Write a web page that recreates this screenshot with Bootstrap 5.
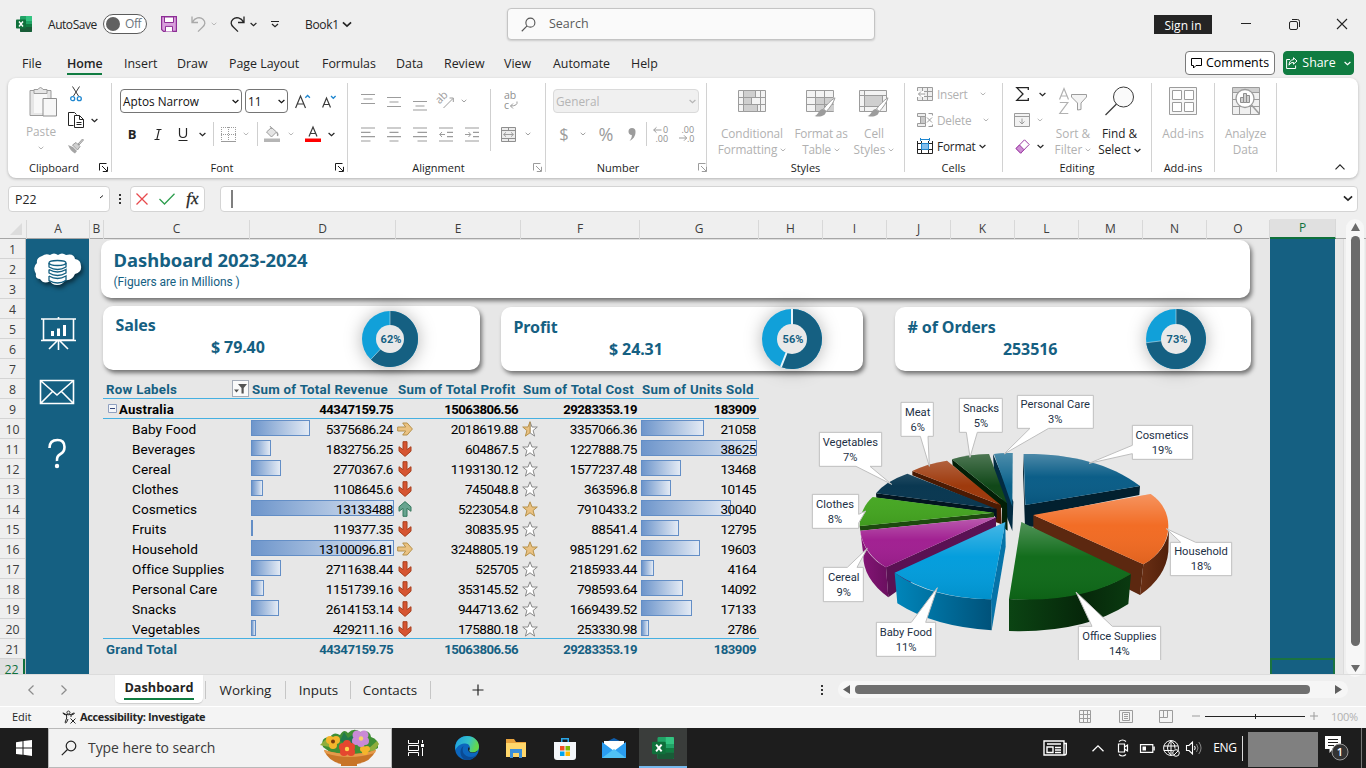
<!DOCTYPE html>
<html lang="en">
<head>
<meta charset="utf-8">
<title>Book1 - Excel</title>
<link href="https://cdn.jsdelivr.net/npm/bootstrap@5.3.0/dist/css/bootstrap.min.css" rel="stylesheet">
<style>
:root{--teal:#156082;--ink:#242424;--dim:#b1b1b1;--ui:"Open Sans","Noto Sans",sans-serif;--doc:Roboto,"Noto Sans",sans-serif}
body{width:1366px;height:768px;overflow:hidden;background:#efefef;font-family:var(--ui);font-size:12px;line-height:16px;color:var(--ink)}
svg{display:block;flex:none;overflow:visible}
.xgrid{display:grid;align-items:center;justify-items:center}
.nw,.xgrid,.rib,.sheetbar{white-space:nowrap}
.ln{fill:none;stroke:currentColor}
.ic-dim{color:#9c9c9c}.t-dim{color:var(--dim)}
.ic{color:#3b3b3b}
/* title bar */
.titlebar{height:48px;grid-template-columns:16px 16px 16px 55px 44px 14px 16px 14px 15px 16px 8px 15px 16px 8px 12px 24px 34px 16px 152px 368px 279px 58px 10px 48px 48px 48px}
.titlebar>.s{justify-self:start;padding-top:1px}
.autosave{letter-spacing:-.45px}
.switch-pill{width:44px;height:20px;border:1px solid #5c5c5c;border-radius:10px;background:#fff}
.switch-pill i{width:14px;height:14px;border-radius:50%;background:#616161;margin-left:2px}
.switch-pill span{letter-spacing:-.4px;padding-left:5px}
.searchbox{width:368px;height:32px;border:1px solid #c4c4c4;border-radius:4px;background:#fafafa;box-shadow:0 1px 2px rgba(0,0,0,.15);font-size:12.5px;color:#5a5a5a}
.signin{width:58px;height:19px;background:#242424;color:#fff;line-height:21px;text-align:center}
/* tabs */
.menurow{height:30px;grid-template-columns:22px 45px 57px 53px 52px 93px 74px 48px 60px 49px 78px 554px 90px 8px 71px;justify-items:start;font-size:12.4px}
.menurow>div{padding-top:1px}
.menurow .cur{font-weight:600;letter-spacing:-.1px}
.menurow .cur:after{content:"";display:block;height:2px;background:#107c41;margin:1px 0 -3px}
.btn-x{height:24px;border:1px solid #7a7a7a;border-radius:4px;background:#fff}
.btn-share{width:71px;background:#107c41;color:#fff;border-color:#107c41}
/* ribbon */
.rib{height:100px;margin:0 8px;padding-top:3px;background:#fff;border-radius:8px;box-shadow:0 1px 3px rgba(0,0,0,.25);font-size:11.8px}
.grp{height:96px}
.gsep{width:1px;height:89px;background:#d2d2d2;margin-top:2px}
.grp .body{height:78px}
.grp .cap{height:18px;line-height:18px;text-align:center;font-size:11px;color:#1c1c1c;position:relative}
.grp .cap svg{position:absolute;right:3px;top:4px}
.r26{height:26px}.r40{height:40px}
.w-clip{width:103px}.w-font{width:235px}.w-align{width:197px}.w-num{width:160px}.w-sty{width:197px}.w-cell{width:97px}.w-edit{width:148px}.w-add{width:62px}.w-ana{width:61px}
.g-clip{grid-template-columns:20px 16px}
.g-f1{grid-template-columns:122px 3px 43px 28px 26px;padding-left:8px}
.g-f2{grid-template-columns:26px 26px 24px 14px 8px 22px 14px 8px 22px 16px 28px 8px;padding-left:7px}
.g-al{grid-template-columns:repeat(5,26px);padding-left:7px}
.g-ar{grid-template-columns:25px 14px}
.g-n{grid-template-columns:22px 16px 30px 22px 6px 24px 28px;padding-left:7px}
.g-sty{grid-template-columns:86px 52px 54px;padding-left:2px}
.g-cell{grid-template-columns:16px 4px 1fr;padding-left:12px;justify-items:start}
.g-cell .t{letter-spacing:-.2px}
.g-ed{grid-template-columns:22px 14px}
.combo{height:24px;border:1px solid #757575;border-radius:4px;padding:0 2px;color:#111}
.combo-off{width:146px;background:#f0f0f0;border-color:#dadada;color:#b5b5b5}
.vs{width:1px;height:24px;background:#cfcfcf}
.vs-tall{height:62px;width:1px;background:#cfcfcf;margin:8px 5px 0 5px}
.big{line-height:15.6px;text-align:center}
.big .pic{height:33px}
/* formula bar */
.fbar{height:41px;padding:8px 8px 0}
.fbox{height:26px;background:#fff;border:1px solid #d4d4d4;border-radius:4px}
.namebox{width:102px;padding:0 6px;font-size:12.3px;line-height:25px}
.fbtns{width:75px}
/* sheet */
.colheads{height:20px;border-bottom:1px solid #a6a6a6;font-size:12px;color:#3d3d3d;grid-template-columns:27px 63px 14px 146px 146px 125px 119px 119px repeat(7,64px) 63px 66px}
.colheads>div{width:100%;height:19px;line-height:18px;text-align:center;border-right:1px solid #d8d8d8}
.colheads>.hot{background:#e0e0e0;color:#0f703b;height:20px;border-bottom:2px solid #0f703b;align-self:start}
.sheet{height:435px;background:#e7e7e7}
.rowheads{width:26px;background:#efefef;border-right:1px solid #c3c3c3;font-size:12.3px;color:#3d3d3d;overflow:hidden;height:435px}
.rowheads div{height:20px;line-height:21px;text-align:center;border-bottom:1px solid #d4d4d4}
.rowheads .hot{background:#e0e0e0;color:#0f703b;border-right:2px solid #0f703b;border-bottom:0}
.side{width:63px;background:var(--teal);color:#fff;padding-left:0}
.canvas{width:1181px;height:435px;overflow:hidden}
.tile{background:#fff;border-radius:10px;box-shadow:2px 3px 4px rgba(0,0,0,.5);color:var(--teal);font-family:"Noto Sans",sans-serif;font-weight:700;font-size:16px;line-height:22px}
.headtile{width:1149px;height:58px;margin:1px 0 0 12px;padding:9px 0 0 12.5px}
.headtile h1{font:700 18.4px/22px "Noto Sans",sans-serif;margin:0}
.headtile p{font:12px/22px var(--doc);margin:0;letter-spacing:-.07px}
.kpis{margin:8px 0 0 14px;height:73px}
.kpi{height:64px;display:grid;letter-spacing:-.1px}
.k1{width:377px;grid-template-columns:255px 64px}.k2{width:362px;grid-template-columns:259px 64px;margin:1px 32px 0 21px}.k3{width:356px;grid-template-columns:249px 64px;margin-top:1px}
.k1 .donut{margin-top:1px}
.kpi .lab{padding:9px 0 0 12.500px}.k1 .lab{padding-top:8px}.kpi .val{padding-left:108px}
.pvt{width:656px;margin-left:14px;font-family:var(--doc);font-size:13.6px;line-height:20px;color:#000}
.pvt .pr{display:grid;grid-template-columns:146px 146px 125px 119px 119px;height:20px}
.pvt .pr>div{position:relative;text-align:right;padding-right:2px;letter-spacing:-.52px}
.pvt .pr>div:first-child{text-align:left;padding-left:29px;letter-spacing:.06px}
.pvt .hd>div:nth-child(n){text-align:left;padding-left:3px;letter-spacing:.28px;line-height:22px}
.pvt .hd,.pvt .tot{color:var(--teal);font-weight:700}
.pvt .hd,.pvt .au,.pvt .last{border-bottom:1px solid #45b0e1}
.pvt .au,.pvt .tot{font-weight:700;font-size:13.2px;line-height:21px}
.pvt .hd{font-size:13.3px}
.pvt .tot>div:first-child{padding-left:3px;letter-spacing:.3px}
.pvt .au>div:first-child{padding-left:16px;letter-spacing:.2px}
.dbar{position:absolute;left:2px;top:1px;height:16px;border:1px solid #638ec6;background:linear-gradient(90deg,#6d95cb,#e3eaf4);z-index:0}
.pvt span{position:relative;z-index:1}
.pvt .mk{position:absolute;left:2px;top:2px}
.filt{position:absolute;right:0;top:1px;width:17px;height:17px;border:1px solid #a5acb8;background:#fafafa}
.chart{margin:6px 0 0 41px;font-family:var(--doc)}
.lbl text{font-size:33.5px;fill:#1d3146;text-anchor:middle}
.lbl path{fill:#fff;stroke:#bfbfbf;stroke-width:3}
.pcol{width:65px;background:var(--teal)}
.selcell{height:16px;border:2px solid #1a7341;border-bottom:0;margin-top:419px}
.vscroll{width:22px;background:#efefef;border-left:1px solid #dcdcdc;margin-left:8px}
/* sheet tabs and status */
.sheetbar{height:33px;border-top:1px solid #dcdcdc;border-bottom:1px solid #fff;font-size:13.4px;grid-template-columns:15px 32px 33px 35px 88px 5px 75px 5px 61px 3px 76px 5px 90px 298px 17px 528px}
.sheetbar>div,.sheetbar>svg{margin-top:-2px}
.sheetbar>.tab-on{width:88px;margin-top:0;height:28px;background:#fff;border-radius:0 0 5px 5px;box-shadow:0 1px 1px #ccc;align-self:start;font-weight:700;font-size:12.7px;text-align:center;line-height:24px}
.tab-on span{display:inline-block;height:25px;border-bottom:2px solid #107c41}
.tsep{width:1px;height:18px;background:#c6c6c6}
.status{height:21px;background:#f4f4f4;font-size:11px;grid-template-columns:12px 50px 18px 126px 873px 40px 40px 46px 100px 26px 35px;justify-items:start;padding-bottom:2px}
.status b{letter-spacing:-.38px}
/* taskbar */
.task{height:40px;background:#1d1d1d;color:#fff;grid-template-columns:48px 344px 48px 54px 43px 55px 45px 51px 341px 52px 34px 16px 32px 16px 30px 32px 2px 80px 38px 5px}
.tsearch{width:344px;height:40px;background:#f2f2f2;border:1px solid #b9b9b9;color:#3a3a3a;font-size:14px;padding-left:12px}
.hot-app{width:48px;height:40px;background:#3a3d3b;border-bottom:2px solid #76b9ed}
.clock{width:70px;height:35px;background:#808080;margin-top:3px}
</style>
</head>
<body class="d-flex flex-column">
<svg width="0" height="0" class="position-absolute">
<defs>
<symbol id="chev" viewBox="0 0 7 5"><path class="ln" stroke-width="1.2" d="M.6 1l2.9 2.7L6.4 1"/></symbol>
<symbol id="launch" viewBox="0 0 9 9"><path class="ln" d="M.5 7.500V.5H7.500M3 3l5 5M8.500 3.800V8.500H3.800"/></symbol>
<symbol id="xl" viewBox="0 0 16 16"><path fill="#21a366" d="M5 0h10q1 0 1 1v14q0 1-1 1H5q-1 0-1-1V1q0-1 1-1z"/><path fill="#33c481" d="M10 0h5q1 0 1 1v4h-6z"/><path fill="#107c41" d="M4 5h6v6H4z"/><path fill="#185c37" d="M4 11h12v4q0 1-1 1H5q-1 0-1-1z"/><path fill="#107c41" d="M10 8h6v3h-6z"/><rect y="3.500" width="10" height="9" rx=".8" fill="#0f703b"/><path stroke="#fff" stroke-width="1.400" d="M3 5.500l4 5M7 5.500l-4 5"/></symbol>
<symbol id="brush" viewBox="0 0 22 20"><path fill="#fff" stroke="#9c9c9c" d="M21 .8C17 3 12.500 8 9.500 12l2.800 2.500C16 10.500 20 5 21 .8z"/><path fill="#9c9c9c" d="M9 12l3 2.800C11.500 19 6 20.500.5 19c4-.8 4-7 8.500-7z"/></symbol>
<symbol id="dn" viewBox="0 0 14 16"><path fill="#d65532" stroke="#a8401f" d="M5 .7h4v8l4-3v4.500L7 15.400l-6-5.200V5.700l4 3z"/></symbol>
<symbol id="up" viewBox="0 0 14 16"><path fill="#68a490" stroke="#35795f" d="M5 15.300h4v-8l4 3V5.800L7 .6 1 5.800v4.500l4-3z"/></symbol>
<symbol id="rt" viewBox="0 0 16 14"><path fill="#eac282" stroke="#b5914c" d="M.7 5v4h8l-3 4h4.500L15.400 7 10.200 1H5.700l3 4z"/></symbol>
<symbol id="st" viewBox="0 0 16 16"><path fill="#fff" stroke="#8a8a8a" d="M8 .8l2 5.200h5.300l-4.200 3.500 1.500 5.600L8 11.800l-4.600 3.300 1.500-5.600L.7 6H6z"/></symbol>
<symbol id="stf" viewBox="0 0 16 16"><path fill="#eac282" stroke="#b5914c" d="M8 .8l2 5.200h5.300l-4.200 3.500 1.500 5.600L8 11.800l-4.600 3.300 1.500-5.600L.7 6H6z"/></symbol>
<symbol id="sth" viewBox="0 0 16 16"><path fill="#fff" stroke="#8a8a8a" d="M8 .8l2 5.200h5.300l-4.200 3.500 1.500 5.600L8 11.800z"/><path fill="#eac282" stroke="#b5914c" d="M8 .8L6 6H.7l4.200 3.500-1.500 5.600L8 11.800z"/></symbol>
<symbol id="mag" viewBox="0 0 16 16"><circle class="ln" cx="10" cy="6" r="4.800" stroke-width="1.200"/><path class="ln" stroke-width="1.200" d="M6.500 9.500L.8 15.200"/></symbol>
</defs>
</svg>

<header class="titlebar xgrid">
  <div></div><svg width="16" height="16"><use href="#xl"/></svg><div></div>
  <div class="s autosave">AutoSave</div>
  <div class="switch-pill d-flex align-items-center"><i></i><span class="text-secondary">Off</span></div>
  <div></div>
  <svg width="16" height="16" viewBox="0 0 16 16"><path fill="#d9a0dc" stroke="#8e2f96" stroke-width="1.200" d="M.6.6h14.800v14.800H2.500L.6 13.500z"/><path fill="#fff" stroke="#8e2f96" d="M3.500 1h9v5.500h-9zM4.500 15.400v-5h7v5"/></svg>
  <div></div>
  <svg width="15" height="16" viewBox="0 0 15 16" color="#a9a9a9"><path class="ln" stroke-width="1.300" d="M1 .5v6h6M1.200 6.300C4 1.500 9 .5 12 3.300s2 5.500-.3 7.700L7 15.600"/></svg>
  <svg width="6" height="4" color="#b5b5b5"><use href="#chev"/></svg>
  <div></div>
  <svg width="15" height="16" viewBox="0 0 15 16"><path class="ln" stroke-width="1.300" d="M14 .5v6H8M13.800 6.300C11 1.500 6 .5 3 3.300s-2 5.500.3 7.700L8 15.600"/></svg>
  <svg width="7" height="5"><use href="#chev"/></svg>
  <div></div>
  <svg width="8" height="8" viewBox="0 0 8 8"><path class="ln" stroke-width="1.200" d="M0 1.500h8M1 4l3 2.800L7 4"/></svg>
  <div></div>
  <div class="s" style="letter-spacing:-.3px">Book1</div>
  <svg width="10" height="7"><use href="#chev"/></svg>
  <div></div>
  <div class="searchbox d-flex align-items-center"><svg width="15" height="15" style="margin:0 9px 0 13px" color="#555"><use href="#mag"/></svg><span class="ms-1">Search</span></div>
  <div></div>
  <div class="signin">Sign in</div><div></div>
  <svg width="10" height="2" viewBox="0 0 10 2"><path class="ln" d="M0 .5h10"/></svg>
  <svg width="11" height="11" viewBox="0 0 11 11"><rect class="ln" x=".5" y="2.500" width="8" height="8" rx="1.500"/><path class="ln" d="M3 .5h5.500q2 0 2 2V8"/></svg>
  <svg width="10" height="10" viewBox="0 0 10 10"><path class="ln" stroke-width="1.100" d="M0 0l10 10M10 0L0 10"/></svg>
</header>

<nav class="menurow xgrid">
  <div></div><div>File</div><div class="cur">Home</div><div>Insert</div><div>Draw</div><div>Page Layout</div><div>Formulas</div><div>Data</div><div>Review</div><div>View</div><div>Automate</div><div>Help</div>
  <button class="btn-x w-100 p-0 d-flex align-items-center justify-content-center gap-1"><svg width="11" height="11" viewBox="0 0 11 11"><path class="ln" d="M.5.5h10v7H5L2.500 10V7.500h-2z"/></svg>Comments</button><div></div>
  <button class="btn-x btn-share p-0 d-flex align-items-center justify-content-center gap-1"><svg width="12" height="12" viewBox="0 0 12 12"><path class="ln" d="M4 2.500H.6v9h9V8.500M7.500.7L11 4 7.500 7.200V5.400Q4.500 5 3 8.200 3.200 3 7.500 2.600z"/></svg>Share<svg width="7" height="5" class="ms-1"><use href="#chev"/></svg></button>
</nav>

<section class="rib d-flex position-relative">
  <div class="grp w-clip">
    <div class="body d-flex ps-2">
      <div class="big t-dim" style="width:50px"><div class="pic pt-1"><svg class="mx-auto" style="transform:translate(2px,1px)" width="28" height="31" viewBox="0 0 28 31"><path fill="#e6e6e6" stroke="#9c9c9c" d="M1 4.500h21v25H1z"/><path fill="#fff" d="M5 7h13v20H5z" opacity=".7"/><path fill="#e6e6e6" stroke="#9c9c9c" d="M5 7.500v-4h4q2.500-4 5 0h4v4z"/><path fill="#f7f7f7" stroke="#8f8f8f" d="M14 12.500h13.500v17.500H14z"/></svg></div><div class="mt-2 pt-1 lh-1">Paste</div><svg class="mx-auto mt-2" width="6" height="4"><use href="#chev"/></svg></div>
      <div>
        <div class="xgrid g-clip r26"><svg width="12" height="16" viewBox="0 0 12 16"><path class="ln ic" d="M2.500.5L8.500 10M9.500.5L3.500 10"/><g fill="none" stroke="#1e86cf" stroke-width="1.300"><circle cx="2.700" cy="12.700" r="2"/><circle cx="9.300" cy="12.700" r="2"/></g></svg></div>
        <div class="xgrid g-clip r26"><svg width="16" height="16" viewBox="0 0 16 16"><path class="ln" d="M5.500 13.500H.5V.5h6l2 2M6.500 3.500h5l4 4v8h-9zM11.500 3.500v4h4M8.500 10.500h5M8.500 12.500h5"/></svg><svg width="7" height="5"><use href="#chev"/></svg></div>
        <div class="xgrid g-clip r26"><svg width="16" height="16" viewBox="0 0 16 16"><path fill="#a5a5a5" d="M0 7l5 2 4 4-2 2.500C4 14 1.500 11 0 7z"/><path fill="#d0d0d0" stroke="#9c9c9c" d="M4.500 7L8 4.500l4 4-2.500 3.500zM10 6l4.500-5L15.500 2l-4.500 5z"/></svg></div>
      </div>
    </div>
    <div class="cap" style="padding-right:11px">Clipboard<svg width="9" height="9"><use href="#launch"/></svg></div>
  </div>
  <div class="gsep"></div>
  <div class="grp w-font">
    <div class="body">
      <div class="xgrid g-f1 r40">
        <div class="combo w-100 d-flex align-items-center justify-content-between">Aptos Narrow<svg width="7" height="5"><use href="#chev"/></svg></div><div></div>
        <div class="combo w-100 d-flex align-items-center justify-content-between">11<svg width="7" height="5"><use href="#chev"/></svg></div>
        <svg width="15" height="15" viewBox="0 0 15 15"><path class="ln ic" stroke-width="1.200" d="M.6 14L5.500 2l5 12M2.300 10h6.500"/><path fill="none" stroke="#1e86cf" stroke-width="1.300" d="M10.300 3.800l2.300-2.300 2.300 2.300"/></svg>
        <svg width="14" height="13" viewBox="0 0 14 13"><path class="ln ic" stroke-width="1.200" d="M.6 12.500L4.500 3l4 9.500M2 9.500h5"/><path fill="none" stroke="#1e86cf" stroke-width="1.300" d="M9 1l2.300 2.300L13.600 1"/></svg>
      </div>
      <div class="xgrid g-f2 r26">
        <b class="fs-6 lh-1" style="font-size:13px!important">B</b>
        <svg width="8" height="11" viewBox="0 0 8 11"><path class="ln" stroke-width="1.100" d="M2.500.5h5M.5 10.500h5M5.200.5l-2.400 10"/></svg>
        <svg width="10" height="13" viewBox="0 0 10 13"><path class="ln" stroke-width="1.200" d="M1.500 0v6q0 3.500 3.500 3.500T8.500 6V0M.5 12.500h9"/></svg>
        <svg width="7" height="5"><use href="#chev"/></svg><div class="vs"></div>
        <svg width="15" height="15" viewBox="0 0 15 15"><path class="ln ic-dim" stroke-dasharray="1 1" d="M0 .5h15M.5 0v15M14.500 0v15M7.500 0v15M0 7.500h15"/><path class="ln ic-dim" d="M0 14.500h15"/></svg>
        <svg width="6" height="4" color="#b5b5b5"><use href="#chev"/></svg><div class="vs"></div>
        <svg width="16" height="16" viewBox="0 0 16 16"><path fill="#e4e4e4" stroke="#9c9c9c" d="M2.500 6l5-4.500 5 4.500-5 5zM6 0l2 3"/><path class="ln ic-dim" stroke-width="1.500" d="M12.500 6q2 2 1 4"/><path fill="#b5b5b5" d="M0 12.500h16V16H0z"/></svg>
        <svg width="6" height="4" color="#b5b5b5"><use href="#chev"/></svg>
        <svg width="16" height="16" viewBox="0 0 16 16"><path class="ln ic" stroke-width="1.200" d="M4 10.500L8 1l4 9.500M5.500 7.500h5"/><path fill="#f00" d="M0 12.500h16V16H0z"/></svg>
        <svg width="7" height="5"><use href="#chev"/></svg>
      </div>
    </div>
    <div class="cap" style="padding-right:15px">Font<svg width="9" height="9"><use href="#launch"/></svg></div>
  </div>
  <div class="gsep"></div>
  <div class="grp w-align">
    <div class="body d-flex ic-dim">
      <div>
        <div class="xgrid g-al r40">
          <svg width="14" height="16" viewBox="0 0 14 16"><path class="ln" stroke-width="1.200" d="M0 1.500h14M2.500 6h9M0 10.500h14"/></svg>
          <svg width="14" height="16" viewBox="0 0 14 16"><path class="ln" stroke-width="1.200" d="M0 4.500h14M2.500 9h9M0 13.500h14"/></svg>
          <svg width="14" height="16" viewBox="0 0 14 16"><path class="ln" stroke-width="1.200" d="M0 8.500h14M2.500 13h9M0 17h14"/></svg>
          <svg width="16" height="16" viewBox="0 0 16 16"><text x="0" y="8" font-size="11" fill="#9c9c9c" transform="rotate(-45 5 8)">ab</text><path class="ln" d="M5.500 15L15 5.500M11.500 5H15.300V9"/></svg>
          <svg width="6" height="4" class="me-3"><use href="#chev"/></svg>
        </div>
        <div class="xgrid g-al r26">
          <svg width="14" height="15" viewBox="0 0 14 15"><path class="ln" stroke-width="1.200" d="M0 1h14M0 5.300h9.500M0 9.600h14M0 14h9.500"/></svg>
          <svg width="14" height="15" viewBox="0 0 14 15"><path class="ln" stroke-width="1.200" d="M0 1h14M2.500 5.300h9M0 9.600h14M2.500 14h9"/></svg>
          <svg width="14" height="15" viewBox="0 0 14 15"><path class="ln" stroke-width="1.200" d="M0 1h14M4.500 5.300H14M0 9.600h14M4.500 14H14"/></svg>
          <svg width="14" height="15" viewBox="0 0 14 15"><path class="ln" stroke-width="1.200" d="M0 1h14M8 5.300h6M8 9.600h6M0 14h14"/><path class="ln" d="M6 7.500H.7M3 5L.7 7.500 3 10"/></svg>
          <svg width="14" height="15" viewBox="0 0 14 15"><path class="ln" stroke-width="1.200" d="M0 1h14M8 5.300h6M8 9.600h6M0 14h14"/><path class="ln" d="M0 7.500h5.500M3.500 5l2.200 2.500L3.500 10"/></svg>
        </div>
      </div>
      <div class="vs-tall"></div>
      <div>
        <div class="xgrid g-ar r40"><svg width="14" height="18" viewBox="0 0 14 18" class="ms-1"><text x="0" y="7" font-size="10.500" fill="#8f8f8f"><tspan>ab</tspan><tspan x="0" y="17">c</tspan></text><path class="ln" d="M13 9.500Q14 14 6.500 14M9 11.500L6.500 14 9 16.500"/></svg></div>
        <div class="xgrid g-ar r26"><svg width="15" height="15" viewBox="0 0 15 15"><path fill="#ececec" stroke="#8f8f8f" d="M.5.5h14v14H.5zM.5 3.500h14M.5 11.500h14M7.500.5v3M7.500 11.500v3"/><path class="ln" d="M2.500 7.500h10M5 5.300L2.700 7.500 5 9.700M10 5.300l2.300 2.200L10 9.700"/></svg><svg width="6" height="4"><use href="#chev"/></svg></div>
      </div>
    </div>
    <div class="cap" style="padding-right:16px">Alignment<svg class="ic-dim" width="9" height="9"><use href="#launch"/></svg></div>
  </div>
  <div class="gsep"></div>
  <div class="grp w-num">
    <div class="body">
      <div class="r40 d-flex align-items-center" style="padding-left:7px"><div class="combo combo-off d-flex align-items-center justify-content-between">General<svg width="7" height="5"><use href="#chev"/></svg></div></div>
      <div class="xgrid g-n r26 ic-dim">
        <span style="font-size:16.500px">$</span><svg width="6" height="4"><use href="#chev"/></svg><span style="font-size:18px">%</span>
        <svg width="8" height="13" viewBox="0 0 8 13"><path fill="currentColor" d="M.5 3.500a3.500 3.500 0 0 1 7 0C7.700 8 5 11.500 1.500 13 3.500 10.500 4 8.500 3.800 7 1.800 7 .5 5.500.5 3.500z"/></svg>
        <div class="vs"></div>
        <svg width="16" height="16" viewBox="0 0 16 16" font-size="9" fill="#8f8f8f"><text x="10" y="6.500"><tspan>0</tspan><tspan x="2.500" y="15.500">.00</tspan></text><path class="ln" d="M8.500 4H.7M3.500 1.300L.7 4l2.800 2.700"/></svg>
        <svg width="16" height="16" viewBox="0 0 16 16" font-size="9" fill="#8f8f8f"><text x="2.500" y="6.500"><tspan>.00</tspan><tspan x="8" y="15.500">.0</tspan></text><path class="ln" d="M0 12h7.500M5 9.300L7.700 12 5 14.700"/></svg>
      </div>
    </div>
    <div class="cap" style="padding-right:16px">Number<svg class="ic-dim" width="9" height="9" style="right:-1px"><use href="#launch"/></svg></div>
  </div>
  <div class="gsep"></div>
  <div class="grp w-sty">
    <div class="body xgrid g-sty t-dim align-items-start">
      <div class="big"><div class="pic" style="padding-top:9px"><svg class="mx-auto" width="28" height="22" viewBox="0 0 28 22"><path fill="#f3f3f3" stroke="#9c9c9c" d="M.5.500h27v21H.5z"/><path fill="#cfcfcf" stroke="#9c9c9c" d="M5.500.5h12v7h-12zM5.500 7.500h8v7h-8zM5.500 14.500h14v7h-14z"/><path class="ln ic-dim" d="M.5 7.500h27M.5 14.500h27M22.500.5v21"/></svg></div><div class="pt-1 mt-2" style="letter-spacing:-.1px">Conditional<br>Formatting <svg class="d-inline" width="6" height="4"><use href="#chev"/></svg></div></div>
      <div class="big"><div class="pic" style="padding-top:9px"><svg class="mx-auto" width="30" height="27" viewBox="0 0 30 27"><path fill="#f3f3f3" stroke="#9c9c9c" d="M.5.500h27v21H.5z"/><path fill="#cfcfcf" d="M10 7h18v14H10z"/><path class="ln ic-dim" d="M.5 7.500h27M.5 14.500h27M9.500.5v21M18.500.5v21"/><svg x="8" y="7" width="22" height="20"><use href="#brush"/></svg></svg></div><div class="mt-2 pt-1" style="letter-spacing:-.2px">Format as<br>Table <svg class="d-inline" width="6" height="4"><use href="#chev"/></svg></div></div>
      <div class="big"><div class="pic" style="padding-top:9px"><svg class="mx-auto" width="30" height="27" viewBox="0 0 30 27"><path fill="#f3f3f3" stroke="#9c9c9c" d="M.5.500h27v21H.5z"/><path fill="#cfcfcf" stroke="#9c9c9c" d="M5.500 5.500h18v11h-18z"/><path class="ln ic-dim" d="M.5 5.500h27M.5 16.500h5M5.500.5v21"/><svg x="8" y="7" width="22" height="20"><use href="#brush"/></svg></svg></div><div class="mt-2 pt-1">Cell<br>Styles <svg class="d-inline" width="6" height="4"><use href="#chev"/></svg></div></div>
    </div>
    <div class="cap">Styles</div>
  </div>
  <div class="gsep"></div>
  <div class="grp w-cell">
    <div class="body">
      <div class="xgrid g-cell r26 t-dim"><svg width="16" height="14" viewBox="0 0 16 14"><path fill="#eee" stroke="#9c9c9c" d="M.5.5h15v13H.5zM.5 4.500h15M.5 9.500h15M5.500.5v13M10.500.5v13"/><path fill="#fff" d="M0 4h7v6H0z"/><path class="ln ic-dim" d="M8 7H1.500M4 4.500L1.500 7 4 9.500"/></svg><i></i><span class="t d-flex align-items-center">Insert<svg style="margin-left:12px" width="6" height="4"><use href="#chev"/></svg></span></div>
      <div class="xgrid g-cell r26 t-dim"><svg width="16" height="14" viewBox="0 0 16 14"><path fill="#eee" stroke="#9c9c9c" d="M.5.5h8v3H.5zM.5 10.500h8v3H.5zM3.500 3.500v7M11.500.5h4v2M11.500 13.500h4v-2"/><path fill="#c9c9c9" stroke="#9c9c9c" d="M3.500 3.500h5v7h-5z"/><path class="ln ic-dim" d="M10 4.500l5 5M15 4.500l-5 5"/></svg><i></i><span class="t d-flex align-items-center">Delete<svg style="margin-left:12px" width="6" height="4"><use href="#chev"/></svg></span></div>
      <div class="xgrid g-cell r26"><svg width="16" height="16" viewBox="0 0 16 16"><path class="ln" d="M.5 3v12.500h15V3M.5 5.500h15M.5 11.500h15M4.500 3v12.500M11.500 3v12.500"/><path fill="#83beec" stroke="#1e86cf" d="M4.500 5.500h7v6h-7z"/><path fill="none" stroke="#1e86cf" d="M3.500 0v3M12.500 0v3M3.500 1.500h9"/></svg><i></i><span class="t d-flex align-items-center">Format<svg style="margin-left:3px" width="7" height="5"><use href="#chev"/></svg></span></div>
    </div>
    <div class="cap">Cells</div>
  </div>
  <div class="gsep"></div>
  <div class="grp w-edit">
    <div class="body d-flex" style="padding-left:8px">
      <div>
        <div class="xgrid g-ed r26"><svg width="13" height="14" viewBox="0 0 13 14"><path class="ln" stroke-width="1.300" d="M12.300 3V.7H.8L7 7 .8 13.300h11.500V11"/></svg><svg width="7" height="5" class="ms-1"><use href="#chev"/></svg></div>
        <div class="xgrid g-ed r26"><svg width="16" height="14" viewBox="0 0 16 14"><path fill="#f2f2f2" stroke="#9c9c9c" d="M.5.5h15v13H.5zM.5 3.500h15"/><path class="ln ic-dim" d="M8 5.500V11M5.500 8.500L8 11l2.500-2.500"/></svg><svg width="6" height="4" color="#b5b5b5"><use href="#chev"/></svg></div>
        <div class="xgrid g-ed r26"><svg width="15" height="15" viewBox="0 0 15 15"><path fill="#fff" stroke="#9b3ba3" d="M9.500.8l4.700 4.700-8.500 8.700L1 9.500z"/><path fill="#cf8fd4" stroke="#9b3ba3" d="M4.500 6L9 10.700l-3.300 3.500L1 9.500z"/></svg><svg width="7" height="5"><use href="#chev"/></svg></div>
      </div>
      <div class="big t-dim" style="width:46px;margin-left:3px"><div class="pic pt-1"><svg class="mx-auto" style="transform:translateY(2px)" width="28" height="28" viewBox="0 0 28 28"><path class="ln" stroke-width="1.200" d="M.5 12.500L5 1.500l4.500 11M2 9h6M.8 15.500h8l-8 11h8.500"/><path fill="#f4f4f4" stroke="#9c9c9c" d="M12.500 7.500h15V10l-5.500 6v6.500l-3.500.5v-7l-6-6z"/></svg></div><div class="mt-2 pt-1">Sort &amp;<br>Filter <svg class="d-inline" width="6" height="4"><use href="#chev"/></svg></div></div>
      <div class="big" style="width:47px"><div class="pic pt-1"><svg class="mx-auto" style="transform:translateY(1px)" width="29" height="30" viewBox="0 0 29 30"><circle cx="18.500" cy="11" r="10" fill="#fafafa" stroke="#3b3b3b"/><path class="ln ic" stroke-width="1.200" d="M11.500 18L.5 29"/></svg></div><div class="mt-2 pt-1">Find &amp;<br>Select <svg class="d-inline" width="7" height="5"><use href="#chev"/></svg></div></div>
    </div>
    <div class="cap">Editing</div>
  </div>
  <div class="gsep"></div>
  <div class="grp w-add">
    <div class="body big t-dim"><div class="pic" style="padding-top:6px"><svg class="mx-auto" width="28" height="28" viewBox="0 0 28 28"><path fill="#f7f7f7" stroke="#9c9c9c" d="M.5.5h27v27H.5z"/><path fill="#fff" stroke="#9c9c9c" d="M3.500 3.500h9v9h-9zM15.500 3.500h9v9h-9zM3.500 15.500h9v9h-9zM15.500 15.500h9v9h-9z"/></svg></div><div class="mt-2 pt-1">Add-ins</div></div>
    <div class="cap">Add-ins</div>
  </div>
  <div class="gsep"></div>
  <div class="grp w-ana">
    <div class="body big t-dim"><div class="pic" style="padding-top:6px"><svg class="mx-auto" width="28" height="28" viewBox="0 0 28 28"><path fill="#f0f0f0" stroke="#9c9c9c" d="M.5.5h27v27H.5z"/><path fill="#cfcfcf" d="M1 1h26v4H1z"/><path class="ln ic-dim" d="M.5 5.500h27M.5 12.500h27M.5 19.500h27M7.500 19v8M18.500 19v8"/><circle cx="13" cy="11.500" r="9" fill="#fff" stroke="#9c9c9c" stroke-width="1.300"/><path class="ln ic-dim" stroke-width="1.500" d="M19.500 18l8 9"/><path fill="#cfcfcf" stroke="#8f8f8f" d="M8.500 10.500h3v5h-3zM11.500 6.500h3v9h-3zM14.500 8.500h3v7h-3z"/></svg></div><div class="mt-2 pt-1" style="letter-spacing:-.15px">Analyze<br>Data</div></div>
  </div>
  <div class="gsep"></div>
  <svg class="ms-auto mt-auto me-3 mb-2" width="10" height="6" viewBox="0 0 10 6" style="transform:translate(3px,0)"><path class="ln" stroke-width="1.200" d="M.5 5.300L5 .8l4.500 4.500"/></svg>
</section>

<section class="fbar d-flex">
  <div class="fbox namebox d-flex justify-content-between">P22<svg width="3" height="4" class="mt-2" viewBox="0 0 3 4"><path class="ln" d="M0 3L3 .5"/></svg></div>
  <svg width="20" height="26" viewBox="0 0 20 26"><path fill="#333" d="M9 8h2v2H9zM9 12h2v2H9zM9 16h2v2H9z"/></svg>
  <div class="fbox fbtns d-flex align-items-center justify-content-around"><svg width="12" height="12" viewBox="0 0 12 12"><path fill="none" stroke="#e8494d" stroke-width="1.300" d="M.5.500l11 11M11.500.5l-11 11"/></svg><svg width="16" height="12" viewBox="0 0 16 12"><path fill="none" stroke="#2f9e4f" stroke-width="1.300" d="M.5 6l5 5L15.500.8"/></svg><i style="font:italic 17px/20px 'Liberation Serif',serif;-webkit-text-stroke:.3px #242424">fx</i></div>
  <div class="fbox flex-grow-1 d-flex justify-content-between align-items-center" style="margin-left:15px"><svg width="2" height="18" style="margin-left:9.500px"><path fill="#000" d="M.5 0h1v18h-1z"/></svg><svg width="10" height="7" class="me-1" style="transform:translateY(-1px)"><use href="#chev"/></svg></div>
</section>

<div class="colheads xgrid" id="cols"></div>
<main class="sheet d-flex">
  <div class="rowheads" id="rows"></div>
  <aside class="side">
    <svg width="63" height="250" viewBox="26 239 63 250">
      <g style="filter:drop-shadow(2px 3px 2px rgba(0,0,0,.5))"><path fill="#fff" d="M37 263q-1-5 5-7 4-3 8-1 4-3 8 0 4-3 8 0 8-2 9 4 6 1 6 7 1 6-6 8-3 7-10 6-2 5-8 5-5 0-7-4-6 4-10-2-5 0-4-5-4-7 1-11z"/></g>
      <g fill="none" stroke="#156082" stroke-width="1.300"><ellipse cx="57.500" cy="263" rx="8.500" ry="2.500"/><path d="M49 263v4q8.500 5 17 0v-4M49 269.500v3.500q8.500 5 17 0v-3.500q-8.500 5-17 0M49 276v4.500q8.500 5 17 0V276q-8.500 5-17 0"/></g>
      <g fill="none" stroke="#fff" stroke-width="1.800"><path d="M41 319h35M43.500 319v21h30v-21M41 340.500h35M58.500 317v2M58.500 341v9M57 341l-8 8M60 341l8 8M40.500 380.500h33v23h-33zM41 381l16 14 16-14M41 403l12-12M73 403L61 391" stroke-width="1.600"/><path stroke-width="3" d="M52.500 336v-5M58.500 336v-7.500M64.500 336v-11"/><path stroke-width="2.600" d="M49.500 448q0-8 8-8 7 0 7 7 0 5-4 7t-3.500 7"/></g><circle cx="57" cy="466" r="2.200" fill="#fff"/>
    </svg>
  </aside>
  <div class="canvas">
    <div class="tile headtile"><h1>Dashboard 2023-2024</h1><p>(Figuers are in Millions )</p></div>
    <div class="kpis d-flex">
      <div class="tile kpi k1"><div><div class="lab">Sales</div><div class="val">$ 79.40</div></div><svg class="donut" data-p="62" data-r="28" width="64" height="64"></svg></div>
      <div class="tile kpi k2"><div><div class="lab">Profit</div><div class="val">$ 24.31</div></div><svg class="donut" data-p="56" data-r="30" data-gap="1" width="64" height="64"></svg></div>
      <div class="tile kpi k3"><div><div class="lab"># of Orders</div><div class="val">253516</div></div><svg class="donut" data-p="73" data-r="30" width="64" height="64"></svg></div>
    </div>
    <div class="d-flex">
      <div class="pvt" id="pvt"></div>
      <svg class="chart" width="440" height="285" viewBox="0 0 1320 855">
        <defs>
          <linearGradient id="sh" x2="0" y2="1"><stop stop-color="#fff" stop-opacity=".28"/><stop offset=".45" stop-color="#fff" stop-opacity=".02"/><stop offset="1" stop-color="#000" stop-opacity=".08"/></linearGradient>
          <linearGradient id="wb"><stop stop-color="#0086bb"/><stop offset="1" stop-color="#00527a"/></linearGradient>
          <linearGradient id="wg"><stop stop-color="#0b4413"/><stop offset=".6" stop-color="#06270a"/><stop offset="1" stop-color="#0a3a10"/></linearGradient>
          <linearGradient id="wo"><stop stop-color="#6b3015"/><stop offset="1" stop-color="#52200a"/></linearGradient>
          <linearGradient id="wp"><stop stop-color="#861577"/><stop offset="1" stop-color="#6a0f5f"/></linearGradient>
        </defs>
        <path fill="#022b42" d="M579 207L640 350L637 438L622 400L582 255z"/>
        <path fill="#07608a" d="M582 207Q608 203 638 204L637 365z"/>
        <path fill="#031f07" d="M456 223L621 355L623 437L606 425V370L458 241z"/>
        <path fill="#0c4414" d="M456 223Q505 208 567 207L621 355z"/>
        <path fill="#4a1a03" d="M337 258L603 361L605 418L588 412V375L337 271z"/>
        <path fill="#9c3608" d="M337 258Q385 235 441 227L603 361z"/>
        <path fill="#021520" d="M228 325L590 371V402L575 383L229 338z"/>
        <path fill="#05344e" d="M228 325Q255 290 322 266L588 371z"/>
        <path fill="#1d4a0f" d="M179 423L582 383V397L181 437z"/>
        <path fill="#45a821" d="M179 423Q180 370 218 336L582 383z"/>
        <path fill="#5a1153" d="M588 397L258 547L265 637L300 612L588 440z"/>
        <path fill="url(#wp)" d="M181 437Q190 510 258 547L265 637Q188 580 190 510z"/>
        <path fill="#a01d90" d="M181 437L588 397L258 547Q190 505 181 437z"/>
        <path fill="#0673a8" d="M616 411L617 485L575 736L573 643z"/>
        <path fill="url(#wb)" d="M284 563Q390 640 573 643L575 736Q400 725 292 655z"/>
        <path fill="#009cdc" d="M284 563L616 411L573 643Q400 640 284 563z"/>
        <path fill="#02202f" d="M670 207L675 360L1020 303L1018 330L702 392V425H675L669 260z"/>
        <path fill="#075b86" d="M671 207C810 206 930 235 1020 303L676 360z"/>
        <path fill="#5c2810" d="M700 390L1030 538L1020 630L990 615L700 428z"/>
        <path fill="url(#wo)" d="M1107 432Q1098 500 1030 538L1020 630Q1098 575 1105 500z"/>
        <path fill="#f26a21" d="M700 390L1052 327C1126 375 1126 485 1030 538z"/>
        <path fill="url(#wg)" d="M627 642Q850 650 993 567L985 657Q850 745 627 738z"/>
        <path fill="#0e6a18" d="M664 411L993 567Q850 655 627 642z"/>
        <g fill="url(#sh)"><path d="M582 207Q608 203 638 204L637 365zM456 223Q505 208 567 207L621 355zM337 258Q385 235 441 227L603 361zM228 325Q255 290 322 266L588 371zM179 423Q180 370 218 336L582 383z"/><path d="M181 437L588 397L258 547Q190 505 181 437z"/><path d="M284 563L616 411L573 643Q400 640 284 563z"/><path d="M671 207C810 206 930 235 1020 303L676 360z"/><path d="M700 390L1052 327C1126 375 1126 485 1030 538z"/><path d="M664 411L993 567Q850 655 627 642z"/></g>
        <g class="lbl">
          <path d="M58 142H245V244H210L275 298L168 244H58z"/><text x="151" y="183">Vegetables</text><text x="151" y="228">7%</text>
          <path d="M303 52H400V154H384L388 244L361 154H303z"/><text x="353" y="94">Meat</text><text x="353" y="138">6%</text>
          <path d="M478 40H607V142H532L510 217L499 142H478z"/><text x="543" y="81">Snacks</text><text x="543" y="126">5%</text>
          <path d="M652 31H880V130H746L612 207L690 130H652z"/><text x="766" y="69">Personal Care</text><text x="766" y="114">3%</text>
          <path d="M997 121H1178V223H997V206L867 235L997 181z"/><text x="1086" y="162">Cosmetics</text><text x="1086" y="207">19%</text>
          <path d="M1111 472H1142L1099 431L1187 472H1295V572H1111z"/><text x="1203" y="510">Household</text><text x="1203" y="555">18%</text>
          <path d="M835 825V724H876L828 621L937 724H1082V825"/><text x="958" y="765">Office Supplies</text><text x="958" y="810">14%</text>
          <path d="M229 712H334L412 608L377 712H407V814H229z"/><text x="318" y="753">Baby Food</text><text x="318" y="798">11%</text>
          <path d="M70 547H142L202 490L171 547H190V650H70z"/><text x="131" y="588">Cereal</text><text x="131" y="633">9%</text>
          <path d="M37 328H176V388L197 378L176 414V430H37z"/><text x="105" y="369">Clothes</text><text x="105" y="414">8%</text>
        </g>
      </svg>
    </div>
  </div>
  <div class="pcol"><div class="selcell"></div></div>
  <div class="vscroll"><svg width="22" height="435" viewBox="1344 239 22 435"><rect x="1346" y="219" width="18" height="458" rx="9" fill="#f7f7f7"/><path fill="#6b6b6b" d="M1351 231l4.500-8 4.500 8zM1351 665h9l-4.500 7z"/><rect x="1351" y="236" width="9" height="410" rx="4.500" fill="#6b6b6b"/></svg></div>
</main>

<div class="sheetbar xgrid">
  <div></div><svg width="6" height="10" viewBox="0 0 6 10" color="#8c8c8c"><path class="ln" stroke-width="1.200" d="M5.500.5L.8 5l4.700 4.500"/></svg><svg width="6" height="10" viewBox="0 0 6 10" color="#8c8c8c"><path class="ln" stroke-width="1.200" d="M.5.5L5.200 5 .5 9.500"/></svg><div></div>
  <div class="tab-on"><span>Dashboard</span></div><div class="tsep"></div><div>Working</div><div class="tsep"></div><div>Inputs</div><div class="tsep"></div><div>Contacts</div><div class="tsep"></div>
  <svg width="12" height="12" viewBox="0 0 12 12"><path class="ln" stroke-width="1.200" d="M6 .5v11M.5 6h11"/></svg>
  <div></div>
  <svg width="4" height="12" viewBox="0 0 4 12" style="justify-self:start"><path fill="#333" d="M0 1h2v2H0zM0 5h2v2H0zM0 9h2v2H0z"/></svg>
  <svg width="511" height="18" viewBox="838 681 511 18" style="justify-self:start"><rect x="838" y="681" width="510" height="17" rx="8.500" fill="#f6f6f6"/><path fill="#5f5f5f" d="M850 685v9l-7-4.500zM1335 685v9l7-4.500z"/><rect x="855" y="685" width="455" height="9" rx="4" fill="#6f6f6f"/></svg>
</div>
<footer class="status xgrid">
  <div></div><div>Edit</div>
  <svg width="14" height="14" viewBox="0 0 14 14"><path class="ln" d="M6.500 1a1.500 1.500 0 1 1-.1 0M1 3q0 1.500 3.500 2l.2 3L3 12.500q1 1 1.500 0L6 9M12.500 3q0 1.500-3.500 2v2M.8 2.800q3 2 5.700 2t5.700-2M8.500 8.500l5 5M13.500 8.500l-5 5"/></svg>
  <b>Accessibility: Investigate</b><div></div>
  <svg class="ic-dim" width="12" height="13" viewBox="0 0 12 13"><path class="ln" d="M.5.500h11v12H.5zM.5 4.500h11M.5 8.500h11M4.500.5v12M8.500.5v12"/></svg>
  <svg class="ic-dim" width="14" height="13" viewBox="0 0 14 13"><path class="ln" d="M.5.500h13v12H.5zM3.500 2.500h7v8h-7zM5 4.500h4M5 6.500h4M5 8.500h4"/></svg>
  <svg class="ic-dim" width="14" height="13" viewBox="0 0 14 13"><path class="ln" d="M.5.500h13v12H.5zM.5 7.500h8v-7M4.500.5v7"/></svg>
  <svg width="100" height="9" viewBox="0 0 100 9"><path class="ln ic-dim" d="M-13 4h8M105 4h8M109 0v8"/><path class="ln" d="M0 4.500h100M50.500 2v5"/></svg>
  <div></div><div class="t-dim" style="letter-spacing:-.3px">100%</div>
</footer>
<footer class="task xgrid">
  <svg width="16" height="16" viewBox="0 0 16 16"><path fill="#fff" d="M0 2.200l6.500-1v6.300H0zM7.500 1.100L16 0v7.500H7.500zM0 8.500h6.500v6.300L0 13.900zM7.500 8.500H16V16l-8.500-1.200z"/></svg>
  <div class="tsearch d-flex align-items-center"><svg width="16" height="16" color="#222"><use href="#mag"/></svg><span style="margin-left:11px;letter-spacing:-.08px">Type here to search</span>
    <svg width="60" height="38" viewBox="0 0 60 38" class="ms-auto me-2" style="transform:translateX(-3px)">
      <path fill="#3f8f35" d="M3 18Q0 8 10 8q4-6 10-2 4-7 8-2 6-6 12-1 10-3 11 5 8 2 7 11L45 26H14z"/><path fill="#217a4c" d="M20 12l4-9 4 6 6-4-1 12z"/><path fill="#8fae3c" d="M4 17l-4-1 5-5 4-3 1 10zM48 20l9-8 2 3-6 9z"/>
      <path fill="#c87528" d="M4 21q26 8 52 0-5 12-19 14v2H21v-2Q8 32 4 21z"/><path fill="#e59a4b" d="M4 21q26 8 52 0l-1 3q-26 8-50 0z"/>
      <g fill="#f4b52c"><circle cx="10" cy="11" r="4"/><circle cx="16" cy="11" r="4"/><circle cx="13" cy="16" r="4"/><circle cx="43" cy="20" r="3"/><circle cx="47" cy="20" r="3"/><circle cx="45" cy="23" r="3"/></g><circle cx="13" cy="12.500" r="2" fill="#7a3b0c"/>
      <g fill="#c98ad6"><circle cx="37" cy="6" r="4.500"/><circle cx="44" cy="6" r="4.500"/><circle cx="36" cy="12" r="4"/><circle cx="45" cy="12" r="4"/><circle cx="41" cy="14" r="4"/></g><circle cx="41" cy="9.500" r="2.200" fill="#f5d36b"/>
      <g fill="#e5472f"><circle cx="23" cy="18" r="4"/><circle cx="31" cy="18" r="4"/><circle cx="27" cy="15" r="4"/><circle cx="24" cy="23" r="4"/><circle cx="31" cy="23" r="4"/></g><circle cx="27" cy="20" r="2.200" fill="#ffd34d"/>
    </svg></div>
  <svg width="16" height="16" viewBox="0 0 16 16"><path class="ln" d="M.5 0v3.500h10V0M.5 16v-3.500h10V16M.5 5.500h10v5H.5zM14.500 0v3M14.500 8v8"/><path fill="#fff" d="M13 4h3v3h-3z"/></svg>
  <svg width="24" height="24" viewBox="0 0 24 24"><defs><linearGradient id="e1" x2="1" y2=".3"><stop stop-color="#1b9de2"/><stop offset=".6" stop-color="#35c1c9"/><stop offset="1" stop-color="#64d84a"/></linearGradient></defs><circle cx="12" cy="12" r="12" fill="#0c66bd"/><path fill="url(#e1)" d="M.5 9C2 3 7 0 12 0c7 0 12 5 12 10.500 0 4-3 6-6.500 6-3 0-4-1.500-3-3 1.500-3-1-6-4-6-4 0-8 1.500-10 6.500q-.5-2 0-5z"/><path fill="#0a4a94" d="M8.500 10C6 15 9 21 16 21q4 0 6-3c-3 5-8 6.500-12 5.800C4.500 21 4 13 8.500 10z"/><path fill="#1d1d1d" d="M14.500 13.500c-1 1.500 0 3 3 3q3 0 5-2c-1 3-9 4-9.500-1 0-1.500.5-2 1-2.500q1 1 .5 2.500z"/></svg>
  <svg width="22" height="20" viewBox="0 0 22 20"><path fill="#e8a33d" d="M1 1h8l2 3h10v15H1z"/><path fill="#ffd76b" d="M1 5h20v14H1z"/><path fill="#3b8fd9" d="M5 11h12v9h-3v-5H8v5H5z"/></svg>
  <svg width="22" height="23" viewBox="0 0 22 23"><path fill="#2aa7e8" d="M7 5V1h8v4h-1.500V2.500h-5V5z"/><path fill="#f4f7fa" d="M0 5h22v15q0 3-3 3H3q-3 0-3-3z"/><path fill="#f25022" d="M6 9h4.500v4.500H6z"/><path fill="#7fba00" d="M11.500 9H16v4.500h-4.500z"/><path fill="#00a4ef" d="M6 14.500h4.500V19H6z"/><path fill="#ffb900" d="M11.500 14.500H16V19h-4.500z"/></svg>
  <svg width="24" height="20" viewBox="0 0 24 20" style="transform:translateX(-1px)"><path fill="#0f5fae" d="M0 6L12 0l12 6v14H0z"/><path fill="#fff" d="M2 3h20v8l-10 5L2 11z"/><path fill="#2a9df0" d="M0 4l12 9L24 4v16H0z"/><path fill="#50c2f5" d="M0 20l12-9 12 9z"/></svg>
  <div class="hot-app d-flex align-items-center justify-content-center"><svg width="24" height="22" style="transform:translateY(1px)"><use href="#xl"/></svg></div>
  <div></div>
  <svg width="24" height="16" viewBox="0 0 24 16"><path class="ln" stroke-width="1.400" d="M1 1h20v14H1zM21 3.500h2.300V13q0 2-2 2M4 4h14M4 7h6v5.500H4zM12 7.500h6M12 10h6M12 12.500h6"/></svg>
  <svg width="12" height="7" viewBox="0 0 12 7"><path class="ln" stroke-width="1.300" d="M.5 6.300L6 .8l5.500 5.500"/></svg>
  <svg width="12" height="18" viewBox="0 0 12 18"><path class="ln" stroke-width="1.200" d="M1.500 5h6v8h-6zM7.500 8l3-2v6l-3-2M2 2.500q3.500-3 7 0M2 15.500q3.500 3 7 0"/></svg>
  <svg width="15" height="9" viewBox="0 0 15 9"><path class="ln" stroke-width="1.200" d="M.5.6h12.300v7.800H.5zM14.200 2.500v4"/><path fill="#fff" d="M2.500 2.500H6v4H2.500z"/></svg>
  <svg width="17" height="17" viewBox="0 0 17 17"><path class="ln" d="M8 .6a7.400 7.400 0 1 0 .1 0M8 .6q-7 7.400 0 14.800M8 .6q5 4 4 8M.8 6h14M.8 10.500h9M8 .6v15"/><circle cx="13" cy="13" r="3.300" fill="#1d1d1d" stroke="#fff"/><path class="ln" d="M11 15l4-4"/></svg>
  <svg width="16" height="14" viewBox="0 0 16 14"><path class="ln" stroke-width="1.100" d="M.5 4.500h2.500L6.500 1v12L3 9.500H.5zM8.500 5q1.500 2 0 4"/><path fill="none" stroke="#888" d="M10.500 3q3 4 0 8M12.800 1q4.500 6 0 12"/></svg>
  <div style="letter-spacing:-.3px">ENG</div>
  <svg width="1" height="25"><path fill="#ddd" d="M0 0h1v25H0z"/></svg>
  <div class="clock"></div>
  <svg width="22" height="26" viewBox="0 0 22 26" style="justify-self:start;margin-left:2px"><path fill="#fff" d="M0 1h16v13H8l-3.500 4v-4H0z"/><path stroke="#1d1d1d" d="M3 4.500h10M3 7.500h10M3 10.500h6"/><circle cx="15" cy="17" r="8" fill="#333" stroke="#999"/><text x="15" y="21" fill="#fff" text-anchor="middle" font-size="11" font-weight="600">1</text></svg>
  <svg width="1" height="40" style="justify-self:start"><path fill="#777" d="M0 0h1v40H0z"/></svg>
</footer>
<script>
// column and row headings
document.getElementById('cols').innerHTML = '<div><svg width="26" height="19"><path fill="#dcdcdc" d="M22 3v12H10z"/></svg></div>' +
  [...'ABCDEFGHIJKLMNOP'].map(c => `<div class="${c === 'P' ? 'hot' : ''}">${c}</div>`).join('');
document.getElementById('rows').innerHTML = Array.from({length: 22}, (_, i) => `<div class="${i === 21 ? 'hot' : ''}">${i + 1}</div>`).join('');

// pivot table: label, revenue, bar, profit, arrow, cost, star, units, bar
const data = [
  ['Baby Food', '5375686.24', 59, '2018619.88', 'rt', '3357066.36', 'sth', '21058', 63],
  ['Beverages', '1832756.25', 20, '604867.5', 'dn', '1227888.75', 'st', '38625', 116],
  ['Cereal', '2770367.6', 30, '1193130.12', 'dn', '1577237.48', 'st', '13468', 40],
  ['Clothes', '1108645.6', 12, '745048.8', 'dn', '363596.8', 'st', '10145', 30],
  ['Cosmetics', '13133488', 143, '5223054.8', 'up', '7910433.2', 'stf', '30040', 90],
  ['Fruits', '119377.35', 1, '30835.95', 'dn', '88541.4', 'st', '12795', 38],
  ['Household', '13100096.81', 143, '3248805.19', 'rt', '9851291.62', 'stf', '19603', 59],
  ['Office Supplies', '2711638.44', 30, '525705', 'dn', '2185933.44', 'st', '4164', 13],
  ['Personal Care', '1151739.16', 13, '353145.52', 'dn', '798593.64', 'st', '14092', 42],
  ['Snacks', '2614153.14', 28, '944713.62', 'dn', '1669439.52', 'st', '17133', 51],
  ['Vegetables', '429211.16', 5, '175880.18', 'dn', '253330.98', 'st', '2786', 8]];
const bar = w => `<i class="dbar" style="width:${w}px"></i>`;
const mark = m => `<svg class="mk" width="16" height="16"><use href="#${m}"/></svg>`;
const sums = '<div>44347159.75</div><div>15063806.56</div><div>29283353.19</div><div>183909</div></div>';
document.getElementById('pvt').innerHTML =
  '<div class="pr hd"><div>Row Labels<i class="filt"><svg width="15" height="15" viewBox="0 0 15 15"><path fill="#555" d="M5 3h9l-3.300 4v5.500H8.500V7zM1 8.500h5L3.500 11.500z"/></svg></i></div><div>Sum of Total Revenue</div><div>Sum of Total Profit</div><div>Sum of Total Cost</div><div>Sum of Units Sold</div></div>' +
  '<div class="pr au"><div><svg width="9" height="9" viewBox="0 0 9 9" style="position:absolute;left:5px;top:5px"><path fill="#f4f6fa" stroke="#8fa0c0" d="M.5.500h8v8h-8z"/><path stroke="#34487a" d="M2 4.500h5"/></svg>Australia</div>' + sums +
  data.map((d, i) => `<div class="pr${i === 10 ? ' last' : ''}"><div>${d[0]}</div><div>${bar(d[2])}<span>${d[1]}</span></div><div>${mark(d[4])}<span>${d[3]}</span></div><div>${mark(d[6])}<span>${d[5]}</span></div><div>${bar(d[8])}<span>${d[7]}</span></div></div>`).join('') +
  '<div class="pr tot"><div>Grand Total</div>' + sums;

// KPI rings
document.querySelectorAll('.donut').forEach(s => {
  const p = s.dataset.p / 100, r = +s.dataset.r, a = p * 2 * Math.PI, x = Math.sin(a), y = -Math.cos(a), c = 32, h = r / 2, gap = s.dataset.gap ? 2 : 0;
  const pt = k => (c + x * k).toFixed(2) + ' ' + (c + y * k).toFixed(2);
  s.innerHTML = `<g style="filter:drop-shadow(0 1px 9px rgba(0,0,0,.3))"><circle cx="32" cy="32" r="${r}" fill="#11a0d9"/></g><path fill="#156082" d="M32 32V${c - r}A${r} ${r} 0 1 1 ${pt(r)}z"/>` +
    `<path stroke="#e8f4fa" stroke-width="${gap || .5}" d="M32 32V${c - r}M32 32L${pt(r)}"/><circle cx="32" cy="32" r="${h}" fill="#e9e9e9"/><text x="33" y="36" text-anchor="middle" font-size="11" font-weight="700" letter-spacing="0" fill="#156082" font-family="Roboto">${s.dataset.p}%</text>`;
});
</script>
<script src="https://cdn.jsdelivr.net/npm/bootstrap@5.3.0/dist/js/bootstrap.bundle.min.js"></script>
</body>
</html>
